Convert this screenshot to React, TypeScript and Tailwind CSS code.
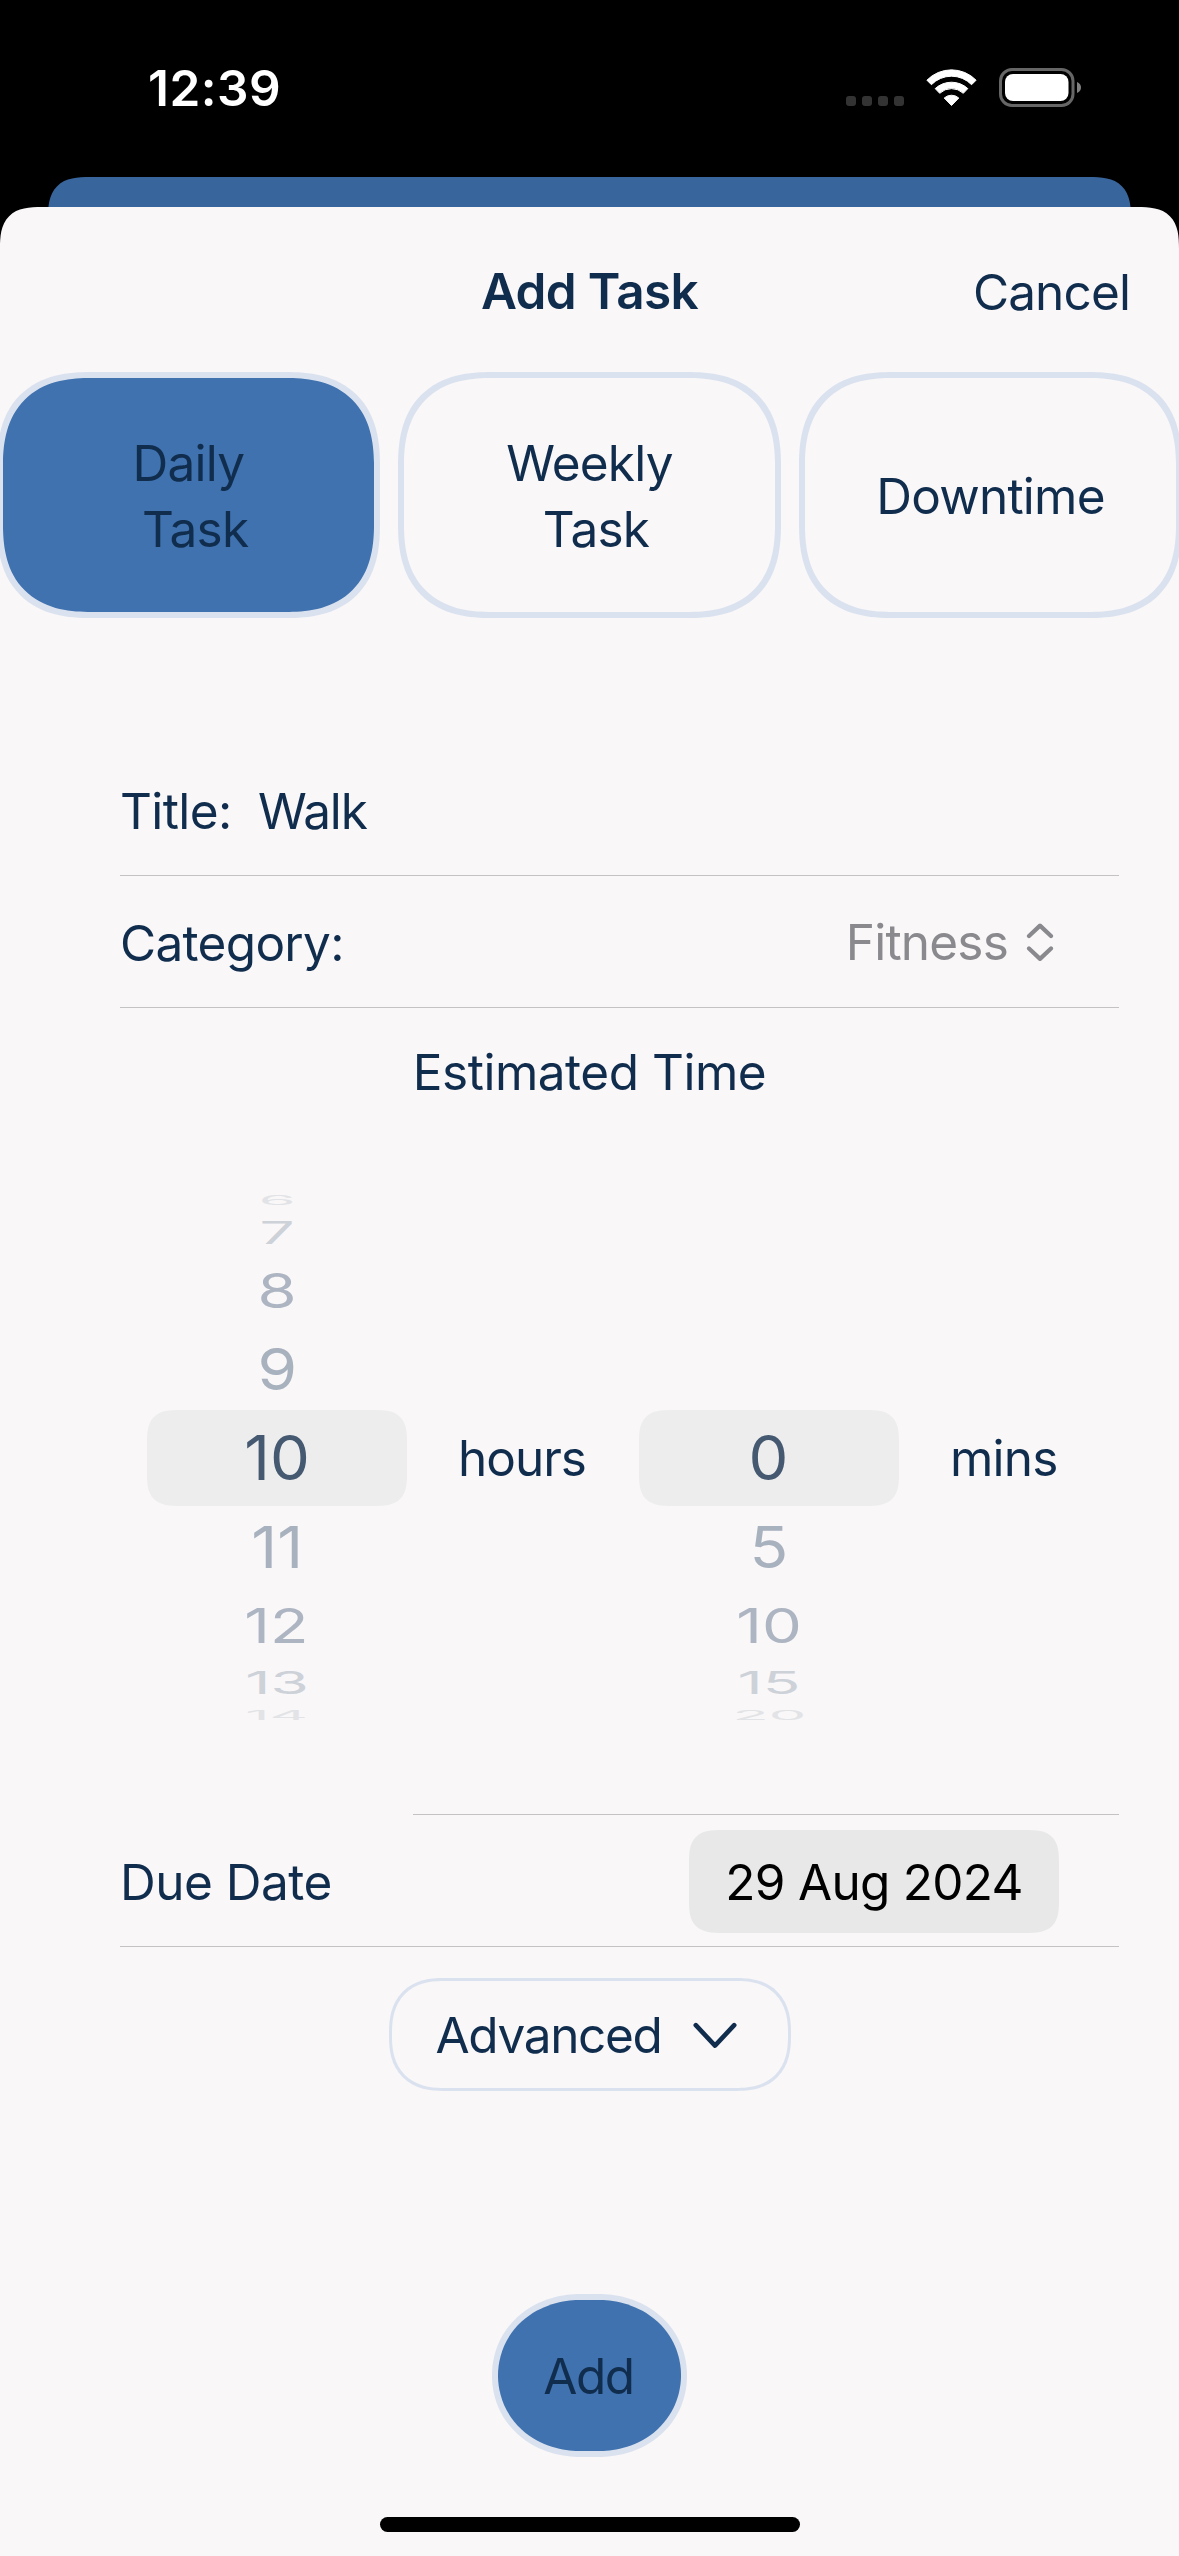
const HOURS = ["6", "7", "8", "9", "10", "11", "12", "13", "14"];
const MINUTES = ["", "", "", "", "0", "5", "10", "15", "20"];

// One entry per wheel slot: row height, row colour and glyph foreshortening.
const SLOTS = [
  { row: "h-[26px] pt-[2px] text-[#e2e3e6]", glyph: "scale-x-[0.96] scale-y-[0.2]" },
  { row: "h-[40px] text-[#cdd1d8]", glyph: "scale-y-[0.5]" },
  { row: "h-[75px] text-[#adb5c2]", glyph: "scale-x-[1.02] scale-y-[0.77]" },
  { row: "h-[82px] text-[#a8b1be]", glyph: "scale-x-[1.03] scale-y-[0.94]" },
  { row: "h-[96px] text-[#455971] bg-[#ededed] rounded-[34px] [corner-shape:superellipse(1.6)]", glyph: "scale-x-[1.02]" },
  { row: "h-[82px] text-[#a8b1be]", glyph: "scale-x-[1.03] scale-y-[0.94]" },
  { row: "h-[75px] text-[#adb5c2]", glyph: "scale-x-[1.02] scale-y-[0.77]" },
  { row: "h-[40px] text-[#cdd1d8]", glyph: "scale-y-[0.5]" },
  { row: "h-[26px] text-[#e2e3e6]", glyph: "scale-x-[0.96] scale-y-[0.2]" },
];

function StatusBar() {
  return (
    <div className="flex h-[177px] text-white">
      <span className="ml-[148px] mt-[58px] font-semibold tracking-[0.5px]">12:39</span>
      <div className="ml-auto mr-[98px] mt-[68px] flex h-[39px]">
        <div className="mt-[28px] flex gap-[6px]">
          <i className="size-[10px] rounded-[3px] bg-[#333333]" />
          <i className="size-[10px] rounded-[3px] bg-[#333333]" />
          <i className="size-[10px] rounded-[3px] bg-[#333333]" />
          <i className="size-[10px] rounded-[3px] bg-[#333333]" />
        </div>
        <svg className="ml-[22px] mt-px h-[37px] w-[51px]" viewBox="0 0 51 37" fill="currentColor" stroke="currentColor" strokeWidth="1" strokeLinejoin="round">
          <path d="M0.9 11.2A34.4 34.4 0 0 1 50.1 11.2L45.6 15.7A28 28 0 0 0 5.4 15.7Z" />
          <path d="M9.2 19.6A24 24 0 0 1 41.8 19.6L37.3 24.3A17.2 17.2 0 0 0 13.7 24.3Z" />
          <path d="M18.2 29A11 11 0 0 1 32.8 29L25.5 36.5Z" />
        </svg>
        <svg className="ml-[22px] h-[39px] w-[82px]" viewBox="0 0 82 39">
          <rect x="1.5" y="1.5" width="72.5" height="36" rx="11.5" fill="none" stroke="#666666" strokeWidth="3" />
          <rect x="6" y="6" width="63.5" height="27" rx="8" fill="#ffffff" />
          <path d="M78 14C80.7 15 82 17.2 82 19.5C82 21.8 80.7 24 78 25Z" fill="#808080" />
        </svg>
      </div>
    </div>
  );
}

function Header() {
  return (
    <header className="grid h-[165px] grid-cols-3 pt-[54px]">
      <h1 className="col-start-2 text-center font-semibold tracking-[-0.67px]">Add Task</h1>
      <button className="mr-[49px] mt-px self-start text-right tracking-[-0.87px]">Cancel</button>
    </header>
  );
}

function TypeButton({ label, active = false }: { label: string; active?: boolean }) {
  const fill = active ? "bg-[#3F72AF]" : "";
  return (
    <button
      className={`flex w-[383px] shrink-0 items-center justify-center whitespace-pre rounded-[94px] border-[6px] border-[#DBE2EF] pt-[2px] text-center leading-[66px] tracking-[-0.75px] [corner-shape:superellipse(1.3)] ${fill}`}
    >
      {label}
    </button>
  );
}

function Wheel({ values }: { values: string[] }) {
  return (
    <div className="w-[260px] text-[62px] leading-none">
      {values.map((value, i) => (
        <div key={i} className={`flex items-center justify-center ${SLOTS[i].row}`}>
          <span className={`inline-block ${SLOTS[i].glyph}`}>{value}</span>
        </div>
      ))}
    </div>
  );
}

function Form() {
  return (
    <section className="ml-[120px] mr-[60px] mt-[126px]">
      <div className="flex h-[132px] border-b border-[#c4c3c4] pt-[37px]">
        <span className="w-[138px] tracking-[-0.6px]">Title:</span>
        <span className="tracking-[-1.1px]">Walk</span>
      </div>
      <div className="flex h-[132px] border-b border-[#c4c3c4] pt-[37px]">
        <span className="tracking-[-0.7px]">Category:</span>
        <div className="-mt-px ml-auto mr-[65px] flex text-[#8a8a8e]">
          <span className="tracking-[-0.8px]">Fitness</span>
          <svg className="ml-[18px] mt-[11px] h-[38px] w-[28px]" viewBox="0 0 28 38" fill="none" stroke="currentColor" strokeWidth="4.2" strokeLinecap="round" strokeLinejoin="round">
            <path d="M3 13L14 2.6L25 13M3 25.5L14 35.9L25 25.5" />
          </svg>
        </div>
      </div>
      <div className="flex h-[807px] flex-col pt-[34px]">
        <h2 className="mr-[60px] text-center tracking-[-0.49px]">Estimated Time</h2>
        <div className="ml-[27px] mt-[85px] flex items-center">
          <Wheel values={HOURS} />
          <span className="ml-[51px] w-[181px] tracking-[-1px]">hours</span>
          <Wheel values={MINUTES} />
          <span className="ml-[51px] tracking-[-0.8px]">mins</span>
        </div>
        <div className="ml-[293px] mt-auto h-px bg-[#c4c3c4]" />
      </div>
      <div className="flex h-[132px] justify-between border-b border-[#c4c3c4]">
        <span className="mt-[37px] tracking-[-0.5px]">Due Date</span>
        <button className="mr-[60px] mt-[15px] h-[103px] w-[370px] rounded-[34px] bg-[#e8e8e8] pt-px text-center tracking-[-0.73px] text-black [corner-shape:superellipse(1.6)]">
          29 Aug 2024
        </button>
      </div>
    </section>
  );
}

export default function App() {
  return (
    <main className="flex h-[2556px] w-[1179px] flex-col overflow-hidden bg-black font-['Inter',sans-serif] text-[49.5px] leading-[60px] text-[#112D4E]">
      <StatusBar />
      <div className="mx-[48px] -mb-[30px] h-[60px] shrink-0 rounded-t-[42px] bg-[#38659b] [corner-shape:superellipse(1.5)]" />
      <div className="relative flex grow flex-col rounded-t-[42px] bg-[#F9F7F8] [corner-shape:superellipse(1.5)]">
        <Header />
        <div className="-mx-[3px] flex h-[246px] justify-between">
          <TypeButton label={"Daily\n Task"} active />
          <TypeButton label={"Weekly\n Task"} />
          <TypeButton label="Downtime" />
        </div>
        <Form />
        <button className="mt-[31px] flex h-[113px] w-[402px] self-center rounded-[54px] border-[3px] border-[#DBE2EF] pl-[44px] pt-[24px] tracking-[-1.35px] [corner-shape:superellipse(1.25)]">
          Advanced
          <svg className="ml-[32px] mt-[16px] h-[28px] w-[44px]" viewBox="0 0 44 28" fill="none" stroke="currentColor" strokeWidth="4.6" strokeLinecap="round" strokeLinejoin="round">
            <path d="M2.8 4.2L22 24.6L41.2 4.2" />
          </svg>
        </button>
        <button className="mt-[203px] h-[163px] w-[195px] self-center rounded-[88px/81px] border-[6px] border-[#DBE2EF] bg-[#3F72AF] pr-[2px] tracking-[-1.5px] [corner-shape:superellipse(1.04)]">
          Add
        </button>
        <div className="mb-[24px] mt-auto h-[15px] w-[420px] self-center rounded-full bg-black" />
      </div>
    </main>
  );
}
